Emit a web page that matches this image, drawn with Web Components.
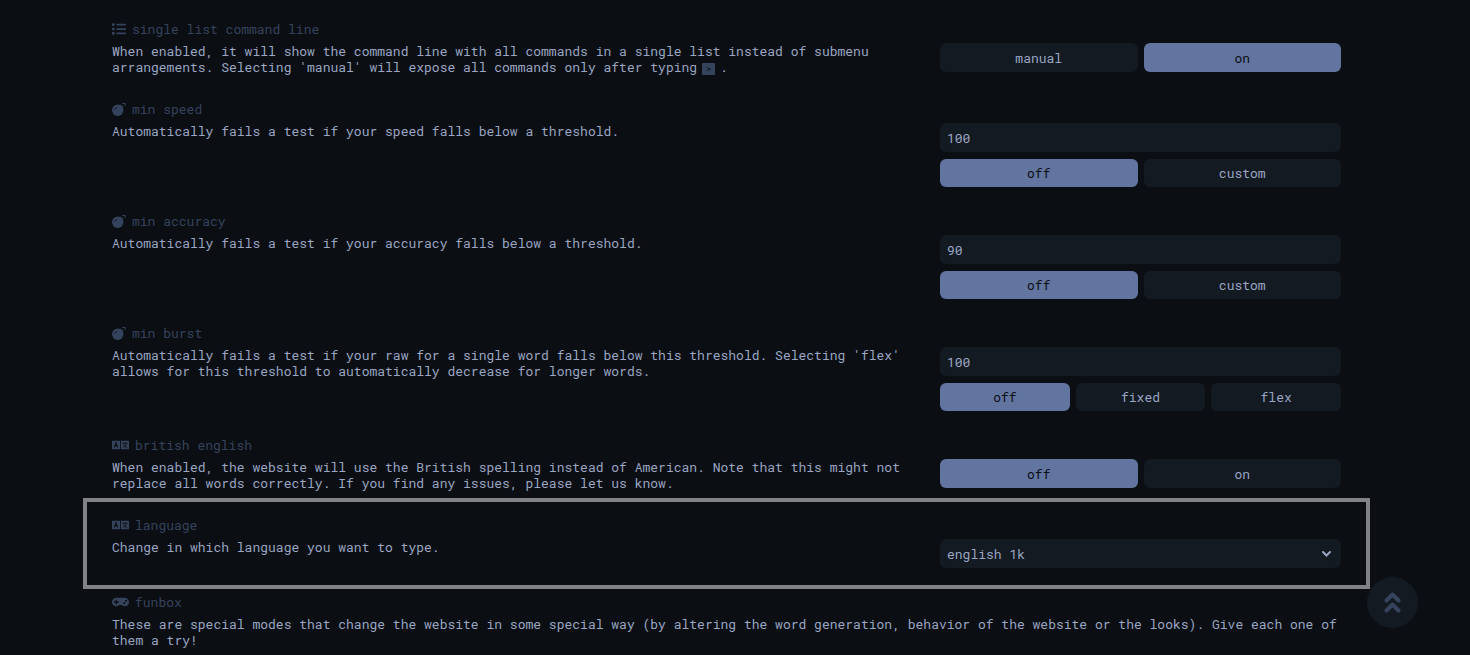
<!DOCTYPE html>
<html lang="en">
<head>
<meta charset="utf-8">
<meta name="viewport" content="width=device-width, initial-scale=1">
<title>settings</title>
<style>
  html {
    --bg: #0b0e13;
    --main: #6275a0;
    --sub: #36435c;
    --sub-alt: #141a22;
    --text: #9aa6c2;
    --frame: #808285;
  }
  body {
    margin: 0;
    min-height: 100vh;
    background: var(--bg);
    color: var(--text);
    font: 13px/16px "Roboto Mono", "DejaVu Sans Mono", "Liberation Mono", monospace;
  }
</style>
</head>
<body>
<settings-page>
  <setting-row icon="list" label="single list command line">
    When enabled, it will show the command line with all commands in a single list instead of submenu arrangements. Selecting 'manual' will expose all commands only after typing <key-cap>&gt;</key-cap> .
    <button-group slot="control" options="manual,on" active="on" label="single list command line"></button-group>
  </setting-row>
  <setting-row icon="bomb" label="min speed">
    Automatically fails a test if your speed falls below a threshold.
    <number-setting slot="control" value="100" options="off,custom" active="off" label="min speed"></number-setting>
  </setting-row>
  <setting-row icon="bomb" label="min accuracy">
    Automatically fails a test if your accuracy falls below a threshold.
    <number-setting slot="control" value="90" options="off,custom" active="off" label="min accuracy"></number-setting>
  </setting-row>
  <setting-row icon="bomb" label="min burst">
    Automatically fails a test if your raw for a single word falls below this threshold. Selecting 'flex' allows for this threshold to automatically decrease for longer words.
    <number-setting slot="control" value="100" options="off,fixed,flex" active="off" label="min burst"></number-setting>
  </setting-row>
  <setting-row icon="language" label="british english">
    When enabled, the website will use the British spelling instead of American. Note that this might not replace all words correctly. If you find any issues, please let us know.
    <button-group slot="control" options="off,on" active="off" label="british english"></button-group>
  </setting-row>
  <setting-row icon="language" label="language" framed>
    Change in which language you want to type.
    <select-setting slot="control" value="english 1k" label="language"></select-setting>
  </setting-row>
  <setting-row icon="gamepad" label="funbox" wide>
    These are special modes that change the website in some special way (by altering the word generation, behavior of the website or the looks). Give each one of them a try!
  </setting-row>
</settings-page>
<scroll-top></scroll-top>

<script>
(function() {
  const icons = {
    list: `<svg viewBox="0 0 512 512" width="14" height="14"><path d="M16 48h64a16 16 0 0 1 16 16v64a16 16 0 0 1-16 16H16a16 16 0 0 1-16-16V64a16 16 0 0 1 16-16zM16 208h64a16 16 0 0 1 16 16v64a16 16 0 0 1-16 16H16a16 16 0 0 1-16-16v-64a16 16 0 0 1 16-16zM16 368h64a16 16 0 0 1 16 16v64a16 16 0 0 1-16 16H16a16 16 0 0 1-16-16v-64a16 16 0 0 1 16-16zM176 64h320a16 16 0 0 1 16 16v32a16 16 0 0 1-16 16H176a16 16 0 0 1-16-16V80a16 16 0 0 1 16-16zM176 224h320a16 16 0 0 1 16 16v32a16 16 0 0 1-16 16H176a16 16 0 0 1-16-16v-32a16 16 0 0 1 16-16zM176 384h320a16 16 0 0 1 16 16v32a16 16 0 0 1-16 16H176a16 16 0 0 1-16-16v-32a16 16 0 0 1 16-16z"/></svg>`,
    bomb: `<svg viewBox="0 0 512 512" width="14" height="14"><circle cx="210" cy="302" r="208"/><path d="M312 92l108 108-50 60-118-118z"/><path d="M376 62c70-46 124 0 98 84" fill="none" stroke="currentColor" stroke-width="38"/><path d="M96 282c4-46 36-78 84-82" fill="none" stroke="var(--bg)" stroke-width="26" stroke-linecap="round"/></svg>`,
    language: `<svg viewBox="0 0 640 512" width="17" height="14"><path d="M24 96h280v320H24a24 24 0 0 1-24-24V120a24 24 0 0 1 24-24zM336 96h280a24 24 0 0 1 24 24v272a24 24 0 0 1-24 24H336z"/><g fill="none" stroke="var(--bg)" stroke-width="40"><path d="M84 344l68-176 68 176M108 288h88"/><path d="M384 192h208M488 150v42M556 192c-20 80-80 130-150 160M420 220c30 60 80 110 150 130" stroke-width="32"/></g></svg>`,
    gamepad: `<svg viewBox="0 0 640 512" width="17" height="14"><path d="M480.07 96H160a160 160 0 1 0 114.24 272h91.5A160 160 0 1 0 480.07 96zM248 268a12 12 0 0 1-12 12h-52v52a12 12 0 0 1-12 12h-24a12 12 0 0 1-12-12v-52H84a12 12 0 0 1-12-12v-24a12 12 0 0 1 12-12h52v-52a12 12 0 0 1 12-12h24a12 12 0 0 1 12 12v52h52a12 12 0 0 1 12 12zm216 76a40 40 0 1 1 40-40 40 40 0 0 1-40 40zm64-96a40 40 0 1 1 40-40 40 40 0 0 1-40 40z"/></svg>`
  };

  class SettingsPage extends HTMLElement {
    constructor() {
      super();
      this.root = this.attachShadow({mode: 'open'});
      this.root.innerHTML = `<style>
        :host { display: block; }
        main {
          display: flex;
          flex-direction: column;
          gap: 26px;
          padding: 21px 129px 0 112px;
        }
      </style>
      <main><slot></slot></main>`;
    }
  }
  window.customElements.define('settings-page', SettingsPage);

  class SettingRow extends HTMLElement {
    constructor() {
      super();
      this.root = this.attachShadow({mode: 'open'});
      this.root.innerHTML = `<style>
        :host { display: block; position: relative; }
        section {
          display: grid;
          grid-template-columns: 2fr 1fr;
          gap: 6px 26px;
          align-items: start;
        }
        h2 {
          grid-column: 1 / -1;
          display: flex;
          align-items: center;
          gap: 6px;
          margin: 0;
          font: inherit;
          color: var(--sub);
        }
        svg { fill: currentColor; flex: none; }
        p { margin: 0; }
        :host([wide]) p { grid-column: 1 / -1; }
        /* frame around the row being pointed out */
        :host([framed])::after {
          content: "";
          position: absolute;
          inset: -19px -29px -21px;
          border: 4px solid var(--frame);
          pointer-events: none;
        }
      </style>
      <section>
        <h2>${icons[this.getAttribute('icon')]}<span>${this.getAttribute('label')}</span></h2>
        <p><slot></slot></p>
        <slot name="control"></slot>
      </section>`;
    }
  }
  window.customElements.define('setting-row', SettingRow);

  class KeyCap extends HTMLElement {
    constructor() {
      super();
      this.root = this.attachShadow({mode: 'open'});
      this.root.innerHTML = `<style>
        :host { display: inline-block; margin: 0 -3px; vertical-align: bottom; }
        kbd {
          display: block;
          padding: 0 4px;
          border-radius: 1px;
          background: var(--sub);
          color: var(--bg);
          font: 9px/12px "Roboto Mono", "DejaVu Sans Mono", monospace;
        }
      </style>
      <kbd><slot></slot></kbd>`;
    }
  }
  window.customElements.define('key-cap', KeyCap);

  class ButtonGroup extends HTMLElement {
    constructor() {
      super();
      this.root = this.attachShadow({mode: 'open'});
      const active = this.getAttribute('active');
      const buttons = this.getAttribute('options').split(',').map(name =>
        `<button type="button" aria-pressed="${name === active}">${name}</button>`).join('');
      this.root.innerHTML = `<style>
        :host { display: block; }
        div {
          display: grid;
          grid-auto-flow: column;
          grid-auto-columns: 1fr;
          gap: 6px;
        }
        button {
          height: var(--button-height, 29px);
          padding: 0 7px;
          border: 0;
          border-radius: 6px;
          background: var(--sub-alt);
          color: var(--text);
          font: inherit;
          cursor: pointer;
        }
        button[aria-pressed="true"] { background: var(--main); color: var(--bg); }
      </style>
      <div role="group" aria-label="${this.getAttribute('label')}">${buttons}</div>`;
      this.root.addEventListener('click', e => {
        if (e.target.localName !== 'button') return;
        this.root.querySelectorAll('button').forEach(b => b.setAttribute('aria-pressed', b === e.target));
      });
    }
  }
  window.customElements.define('button-group', ButtonGroup);

  class NumberSetting extends HTMLElement {
    constructor() {
      super();
      this.root = this.attachShadow({mode: 'open'});
      const label = this.getAttribute('label');
      this.root.innerHTML = `<style>
        :host {
          display: grid;
          gap: 7px;
          --button-height: 28px;
        }
        input {
          box-sizing: border-box;
          width: 100%;
          height: 29px;
          padding: 0 7px;
          border: 0;
          border-radius: 6px;
          background: var(--sub-alt);
          color: var(--text);
          font: inherit;
        }
      </style>
      <input type="text" inputmode="numeric" aria-label="${label}" value="${this.getAttribute('value')}">
      <button-group options="${this.getAttribute('options')}" active="${this.getAttribute('active')}" label="${label}"></button-group>`;
    }
  }
  window.customElements.define('number-setting', NumberSetting);

  class SelectSetting extends HTMLElement {
    constructor() {
      super();
      this.root = this.attachShadow({mode: 'open'});
      this.root.innerHTML = `<style>
        :host { display: block; position: relative; }
        select {
          appearance: none;
          display: block;
          width: 100%;
          height: 29px;
          padding: 0 28px 0 7px;
          border: 0;
          border-radius: 6px;
          background: var(--sub-alt);
          color: var(--text);
          font: inherit;
        }
        svg {
          position: absolute;
          top: 11px;
          right: 9px;
          fill: none;
          stroke: var(--text);
          stroke-width: 2;
          stroke-linecap: round;
          pointer-events: none;
        }
      </style>
      <select aria-label="${this.getAttribute('label')}"><option>${this.getAttribute('value')}</option></select>
      <svg viewBox="0 0 11 8" width="11" height="8"><path d="M2 2l3.500 3.500 3.500-3.500"/></svg>`;
    }
  }
  window.customElements.define('select-setting', SelectSetting);

  class ScrollTop extends HTMLElement {
    constructor() {
      super();
      this.root = this.attachShadow({mode: 'open'});
      this.root.innerHTML = `<style>
        :host { position: fixed; right: 52px; bottom: 27px; }
        button {
          display: grid;
          place-items: center;
          width: 51px;
          height: 51px;
          padding: 0;
          border: 0;
          border-radius: 50%;
          background: var(--sub-alt);
          cursor: pointer;
        }
        svg { fill: none; stroke: var(--sub); stroke-width: 4; stroke-linecap: round; stroke-linejoin: round; }
      </style>
      <button type="button" aria-label="scroll to top">
        <svg viewBox="0 0 17 21" width="17" height="21"><path d="M2.500 8.500l6-6 6 6M2.500 18.500l6-6 6 6"/></svg>
      </button>`;
      this.root.querySelector('button').addEventListener('click', () => window.scrollTo({top: 0, behavior: 'smooth'}));
    }
  }
  window.customElements.define('scroll-top', ScrollTop);
})();
</script>
</body>
</html>
